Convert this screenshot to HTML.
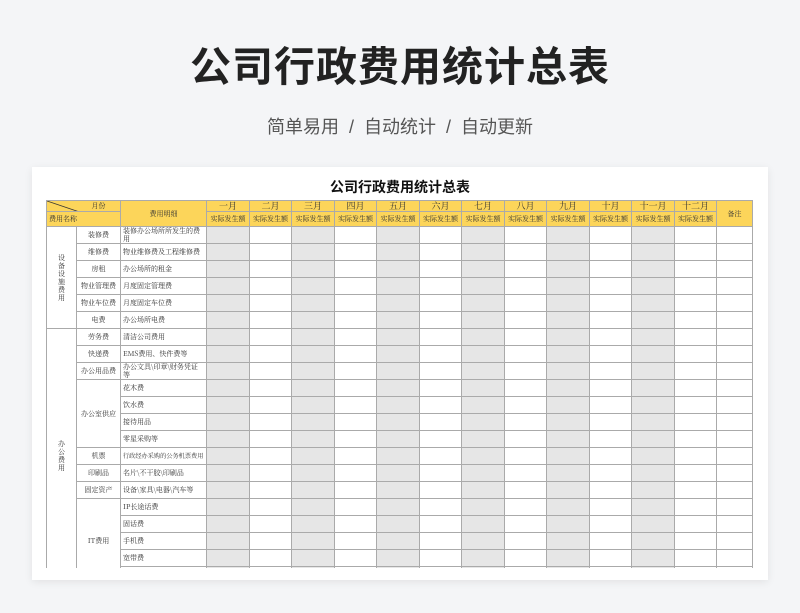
<!DOCTYPE html>
<html><head><meta charset="utf-8">
<style>
body{margin:0;width:800px;height:613px;background:#f4f5f7;font-family:"Liberation Sans","Noto Sans CJK SC",sans-serif;position:relative;overflow:hidden}
.h1{position:absolute;top:33px;left:0;width:800px;text-align:center;font-size:41px;font-weight:bold;color:#222;letter-spacing:1px}
.h2{position:absolute;top:113px;left:0;width:800px;text-align:center;font-size:18px;color:#555}
.card{position:absolute;left:32px;top:167px;width:736px;height:413px;background:#fff;box-shadow:0 2px 8px rgba(0,0,0,.08);overflow:hidden}
.t{position:absolute;left:0;top:10px;width:736px;text-align:center;font-size:14px;font-weight:bold;color:#111}
table{position:absolute;left:14px;top:33px;border-collapse:collapse;table-layout:fixed;font-family:"Noto Serif CJK SC",serif;font-size:7px;color:#333}
td{border:1px solid #aaa;padding:0 2px;height:16px;line-height:8px;overflow:hidden}
tr.r1 td{height:10px;line-height:10px;padding:0}
tr.r2 td{height:14px;line-height:8px;padding:0}
.y{background:#fcd55a;text-align:center}
.g{background:#e6e6e6}
.c{text-align:center}
</style></head><body>
<div class="h1">公司行政费用统计总表</div>
<div class="h2">简单易用 &nbsp;/ &nbsp;自动统计 &nbsp;/ &nbsp;自动更新</div>
<div class="card"><div class="t">公司行政费用统计总表</div>
<table>
<colgroup><col style="width:30px"><col style="width:44px"><col style="width:86px">
<col style="width:43px"><col style="width:42px"><col style="width:43px"><col style="width:42px"><col style="width:43px"><col style="width:42px"><col style="width:43px"><col style="width:42px"><col style="width:43px"><col style="width:42px"><col style="width:43px"><col style="width:42px"><col style="width:36px"></colgroup>
<tr class="r1"><td class="y" colspan="2" style="position:relative"><svg style="position:absolute;left:0;top:0" width="74" height="25"><line x1="0" y1="0" x2="74" y2="25" stroke="#333" stroke-width=".8"/></svg><span style="margin-left:30px">月份</span></td><td class="y" rowspan="2">费用明细</td>
<td class="y" style="font-size:9px">一月</td><td class="y" style="font-size:9px">二月</td><td class="y" style="font-size:9px">三月</td><td class="y" style="font-size:9px">四月</td><td class="y" style="font-size:9px">五月</td><td class="y" style="font-size:9px">六月</td><td class="y" style="font-size:9px">七月</td><td class="y" style="font-size:9px">八月</td><td class="y" style="font-size:9px">九月</td><td class="y" style="font-size:9px">十月</td><td class="y" style="font-size:9px">十一月</td><td class="y" style="font-size:9px">十二月</td><td class="y" rowspan="2">备注</td></tr>
<tr class="r2"><td class="y" colspan="2" style="text-align:left;padding-left:2px">费用名称</td>
<td class="y">实际发生额</td><td class="y">实际发生额</td><td class="y">实际发生额</td><td class="y">实际发生额</td><td class="y">实际发生额</td><td class="y">实际发生额</td><td class="y">实际发生额</td><td class="y">实际发生额</td><td class="y">实际发生额</td><td class="y">实际发生额</td><td class="y">实际发生额</td><td class="y">实际发生额</td></tr>
<tr><td class="c" rowspan="6">设<br>备<br>设<br>施<br>费<br>用</td><td class="c">装修费</td><td>装修办公场所所发生的费用</td><td class="g"></td><td></td><td class="g"></td><td></td><td class="g"></td><td></td><td class="g"></td><td></td><td class="g"></td><td></td><td class="g"></td><td></td><td></td></tr>
<tr><td class="c">维修费</td><td>物业维修费及工程维修费</td><td class="g"></td><td></td><td class="g"></td><td></td><td class="g"></td><td></td><td class="g"></td><td></td><td class="g"></td><td></td><td class="g"></td><td></td><td></td></tr>
<tr><td class="c">房租</td><td>办公场所的租金</td><td class="g"></td><td></td><td class="g"></td><td></td><td class="g"></td><td></td><td class="g"></td><td></td><td class="g"></td><td></td><td class="g"></td><td></td><td></td></tr>
<tr><td class="c">物业管理费</td><td>月度固定管理费</td><td class="g"></td><td></td><td class="g"></td><td></td><td class="g"></td><td></td><td class="g"></td><td></td><td class="g"></td><td></td><td class="g"></td><td></td><td></td></tr>
<tr><td class="c">物业车位费</td><td>月度固定车位费</td><td class="g"></td><td></td><td class="g"></td><td></td><td class="g"></td><td></td><td class="g"></td><td></td><td class="g"></td><td></td><td class="g"></td><td></td><td></td></tr>
<tr><td class="c">电费</td><td>办公场所电费</td><td class="g"></td><td></td><td class="g"></td><td></td><td class="g"></td><td></td><td class="g"></td><td></td><td class="g"></td><td></td><td class="g"></td><td></td><td></td></tr>
<tr><td class="c" rowspan="15">办<br>公<br>费<br>用</td><td class="c">劳务费</td><td>清洁公司费用</td><td class="g"></td><td></td><td class="g"></td><td></td><td class="g"></td><td></td><td class="g"></td><td></td><td class="g"></td><td></td><td class="g"></td><td></td><td></td></tr>
<tr><td class="c">快递费</td><td>EMS费用、快件费等</td><td class="g"></td><td></td><td class="g"></td><td></td><td class="g"></td><td></td><td class="g"></td><td></td><td class="g"></td><td></td><td class="g"></td><td></td><td></td></tr>
<tr><td class="c">办公用品费</td><td>办公文具\印章\财务凭证等</td><td class="g"></td><td></td><td class="g"></td><td></td><td class="g"></td><td></td><td class="g"></td><td></td><td class="g"></td><td></td><td class="g"></td><td></td><td></td></tr>
<tr><td class="c" rowspan="4">办公室供应</td><td>花木费</td><td class="g"></td><td></td><td class="g"></td><td></td><td class="g"></td><td></td><td class="g"></td><td></td><td class="g"></td><td></td><td class="g"></td><td></td><td></td></tr>
<tr><td>饮水费</td><td class="g"></td><td></td><td class="g"></td><td></td><td class="g"></td><td></td><td class="g"></td><td></td><td class="g"></td><td></td><td class="g"></td><td></td><td></td></tr>
<tr><td>接待用品</td><td class="g"></td><td></td><td class="g"></td><td></td><td class="g"></td><td></td><td class="g"></td><td></td><td class="g"></td><td></td><td class="g"></td><td></td><td></td></tr>
<tr><td>零星采购等</td><td class="g"></td><td></td><td class="g"></td><td></td><td class="g"></td><td></td><td class="g"></td><td></td><td class="g"></td><td></td><td class="g"></td><td></td><td></td></tr>
<tr><td class="c">机票</td><td style="font-size:6.2px;white-space:nowrap">行政经办采购的公务机票费用</td><td class="g"></td><td></td><td class="g"></td><td></td><td class="g"></td><td></td><td class="g"></td><td></td><td class="g"></td><td></td><td class="g"></td><td></td><td></td></tr>
<tr><td class="c">印刷品</td><td>名片\不干胶\印刷品</td><td class="g"></td><td></td><td class="g"></td><td></td><td class="g"></td><td></td><td class="g"></td><td></td><td class="g"></td><td></td><td class="g"></td><td></td><td></td></tr>
<tr><td class="c">固定资产</td><td>设备\家具\电器\汽车等</td><td class="g"></td><td></td><td class="g"></td><td></td><td class="g"></td><td></td><td class="g"></td><td></td><td class="g"></td><td></td><td class="g"></td><td></td><td></td></tr>
<tr><td class="c" rowspan="5">IT费用</td><td>IP长途话费</td><td class="g"></td><td></td><td class="g"></td><td></td><td class="g"></td><td></td><td class="g"></td><td></td><td class="g"></td><td></td><td class="g"></td><td></td><td></td></tr>
<tr><td>固话费</td><td class="g"></td><td></td><td class="g"></td><td></td><td class="g"></td><td></td><td class="g"></td><td></td><td class="g"></td><td></td><td class="g"></td><td></td><td></td></tr>
<tr><td>手机费</td><td class="g"></td><td></td><td class="g"></td><td></td><td class="g"></td><td></td><td class="g"></td><td></td><td class="g"></td><td></td><td class="g"></td><td></td><td></td></tr>
<tr><td>宽带费</td><td class="g"></td><td></td><td class="g"></td><td></td><td class="g"></td><td></td><td class="g"></td><td></td><td class="g"></td><td></td><td class="g"></td><td></td><td></td></tr>
<tr><td></td><td class="g"></td><td></td><td class="g"></td><td></td><td class="g"></td><td></td><td class="g"></td><td></td><td class="g"></td><td></td><td class="g"></td><td></td><td></td></tr>
</table>
<div style="position:absolute;left:0;top:401px;width:736px;height:12px;background:#fff"></div>
</div>
</body></html>
